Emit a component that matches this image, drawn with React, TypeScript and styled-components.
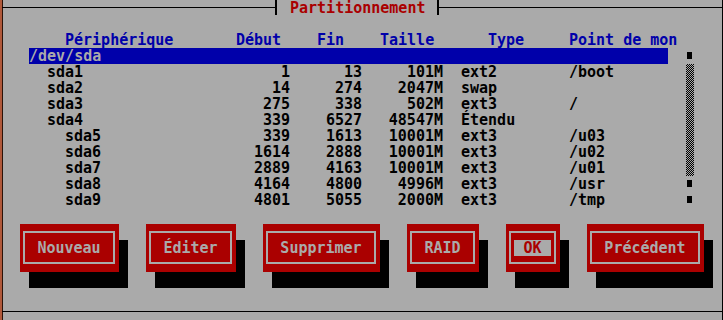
import styled, { createGlobalStyle, css } from "styled-components";

// text-mode screen: every cell is 9x16 px, column 0 starts at x = 2
const CW = 9;
const cols = (n: number) => `${n * CW}px`;

const GRAY = "#aaaaaa";
const BLUE = "#0000aa";
const RED = "#aa0000";

const GlobalStyle = createGlobalStyle`
  html, body {
    margin: 0;
    padding: 0;
    background: ${GRAY};
  }
  body {
    font-family: "DejaVu Sans Mono", "Liberation Mono", monospace;
    font-size: 15px;
    font-weight: bold;
    line-height: 16px;
  }
`;

const Screen = styled.div`
  width: 723px;
  height: 320px;
  box-sizing: border-box;
  overflow: hidden;
  display: flex;
  flex-direction: column;
  background: ${GRAY};
  border-right: 1px solid #000;
  box-shadow: inset 2px 0 0 #b0583a, inset 3px 0 0 #2a1208;
`;

const TitleBar = styled.div`
  display: flex;
  height: 16px;
  padding-left: 2px;
`;

const Rule = styled.div<{ $grow?: boolean }>`
  height: 1px;
  margin-top: 7px;
  background: #000;
  ${(p) => (p.$grow ? "flex: 1;" : "width: 273px;")}
`;

const Tick = styled.div`
  width: 2px;
  height: 15px;
  background: #000;
`;

const Title = styled.div`
  color: ${RED};
  padding: 0 12px 0 13px;
  white-space: nowrap;
`;

const HeaderRow = styled.div`
  display: grid;
  grid-template-columns: ${cols(19)} ${cols(9)} ${cols(7)} ${cols(12)} ${cols(9)} auto;
  margin-top: 16px;
  padding-left: 65px;
  height: 16px;
  color: ${BLUE};
  white-space: nowrap;
`;

const ListWrap = styled.div`
  display: flex;
  padding-left: 29px;
  height: 160px;
`;

const List = styled.div`
  width: ${cols(71)};
  display: flex;
  flex-direction: column;
`;

const DataRow = styled.div<{ $selected?: boolean }>`
  display: grid;
  grid-template-columns: ${cols(22)} ${cols(7)} ${cols(8)} ${cols(9)} ${cols(14)} ${cols(11)};
  height: 16px;
  color: #000;
  white-space: nowrap;
  ${(p) =>
    p.$selected &&
    css`
      background: ${BLUE};
      color: ${GRAY};
    `}
`;

const Name = styled.span<{ $level: number }>`
  padding-left: ${(p) => p.$level * 2 * CW}px;
`;

const Num = styled.span`
  text-align: right;
`;

const Type = styled.span`
  padding-left: ${cols(2)};
`;

const Scrollbar = styled.div`
  width: 9px;
  margin-left: 18px;
  display: flex;
  flex-direction: column;
`;

const ScrollMark = styled.div`
  width: 5px;
  height: 7px;
  margin: 4px 0 5px 1px;
  background: #000;
`;

const Track = styled.div`
  width: 8px;
  height: 112px;
  background: repeating-conic-gradient(#000 0 25%, ${GRAY} 0 50%) 0 0 / 2px 2px;
`;

const ButtonBar = styled.div`
  display: flex;
  gap: 27px;
  margin-top: 16px;
  padding-left: 20px;
`;

const Button = styled.div<{ $cols: number }>`
  width: ${(p) => cols(p.$cols)};
  height: 48px;
  box-sizing: border-box;
  display: flex;
  padding: 7px 4px 8px 3px;
  background: ${RED};
  box-shadow: 9px 16px 0 #000;
`;

const Frame = styled.div`
  flex: 1;
  display: flex;
  align-items: center;
  justify-content: center;
  border: 2px solid ${GRAY};
`;

const Label = styled.span<{ $focused?: boolean }>`
  padding: 0 9px;
  line-height: 16px;
  color: ${GRAY};
  white-space: nowrap;
  ${(p) =>
    p.$focused &&
    css`
      background: ${GRAY};
      color: ${RED};
    `}
`;

const BottomRule = styled.div`
  height: 1px;
  margin: 39px 0 0 2px;
  background: #000;
`;

type Part = {
  name: string;
  level: number;
  start?: string;
  end?: string;
  size?: string;
  type?: string;
  mount?: string;
  selected?: boolean;
};

const parts: Part[] = [
  { name: "/dev/sda", level: 0, selected: true },
  { name: "sda1", level: 1, start: "1", end: "13", size: "101M", type: "ext2", mount: "/boot" },
  { name: "sda2", level: 1, start: "14", end: "274", size: "2047M", type: "swap" },
  { name: "sda3", level: 1, start: "275", end: "338", size: "502M", type: "ext3", mount: "/" },
  { name: "sda4", level: 1, start: "339", end: "6527", size: "48547M", type: "Étendu" },
  { name: "sda5", level: 2, start: "339", end: "1613", size: "10001M", type: "ext3", mount: "/u03" },
  { name: "sda6", level: 2, start: "1614", end: "2888", size: "10001M", type: "ext3", mount: "/u02" },
  { name: "sda7", level: 2, start: "2889", end: "4163", size: "10001M", type: "ext3", mount: "/u01" },
  { name: "sda8", level: 2, start: "4164", end: "4800", size: "4996M", type: "ext3", mount: "/usr" },
  { name: "sda9", level: 2, start: "4801", end: "5055", size: "2000M", type: "ext3", mount: "/tmp" },
];

const buttons = [
  { label: "Nouveau", cols: 11 },
  { label: "Éditer", cols: 10 },
  { label: "Supprimer", cols: 13 },
  { label: "RAID", cols: 8 },
  { label: "OK", cols: 6, focused: true },
  { label: "Précédent", cols: 13 },
];

const App = () => (
  <>
    <GlobalStyle />
    <Screen>
      <TitleBar>
        <Rule />
        <Tick />
        <Title>Partitionnement</Title>
        <Tick />
        <Rule $grow />
      </TitleBar>

      <HeaderRow>
        <span>Périphérique</span>
        <span>Début</span>
        <span>Fin</span>
        <span>Taille</span>
        <span>Type</span>
        <span>Point de mon</span>
      </HeaderRow>

      <ListWrap>
        <List>
          {parts.map((p) => (
            <DataRow key={p.name} $selected={p.selected}>
              <Name $level={p.level}>{p.name}</Name>
              <Num>{p.start}</Num>
              <Num>{p.end}</Num>
              <Num>{p.size}</Num>
              <Type>{p.type}</Type>
              <span>{p.mount}</span>
            </DataRow>
          ))}
        </List>
        <Scrollbar>
          <ScrollMark />
          <Track />
          <ScrollMark />
          <ScrollMark />
        </Scrollbar>
      </ListWrap>

      <ButtonBar>
        {buttons.map((b) => (
          <Button key={b.label} $cols={b.cols}>
            <Frame>
              <Label $focused={b.focused}>{b.label}</Label>
            </Frame>
          </Button>
        ))}
      </ButtonBar>

      <BottomRule />
    </Screen>
  </>
);

export default App;
